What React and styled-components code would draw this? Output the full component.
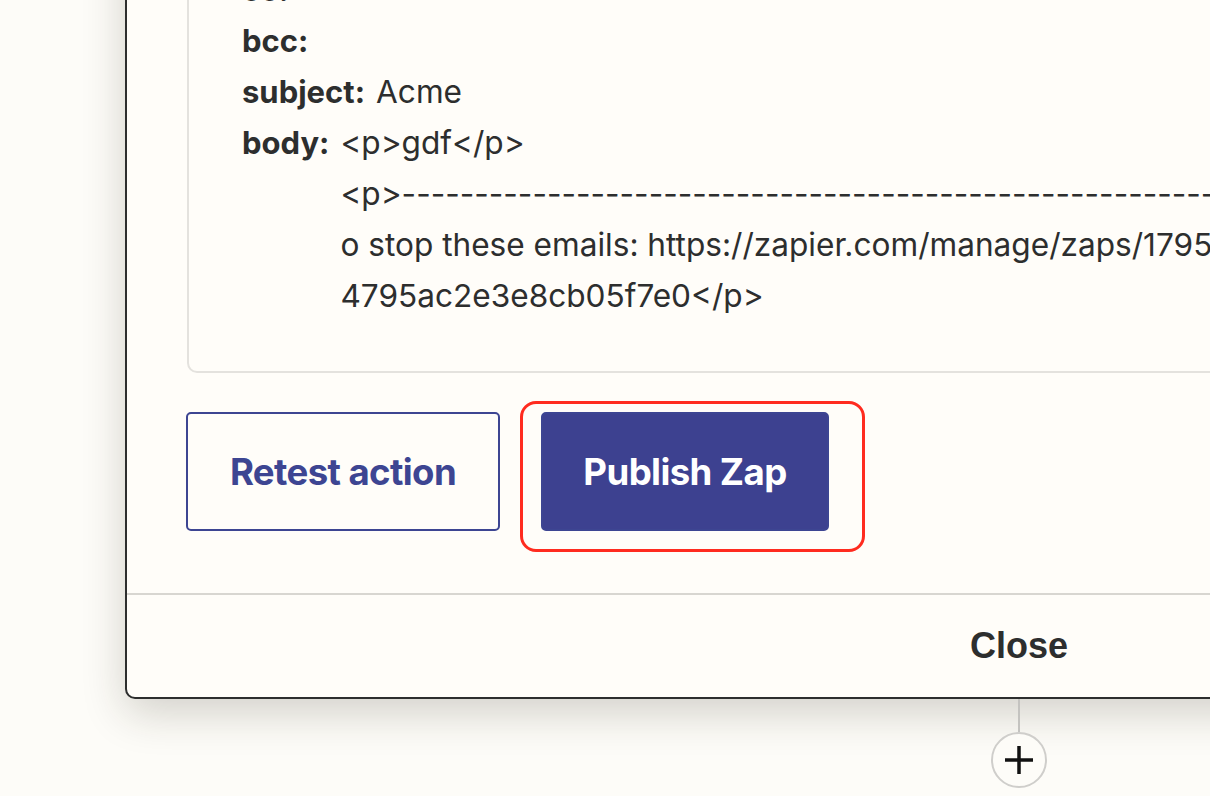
import React from "react";
import styled, { createGlobalStyle } from "styled-components";

const Global = createGlobalStyle`
  html, body { margin: 0; padding: 0; background: #fdfcf8; overflow: hidden; }
  body { font-family: Inter, "Noto Sans", sans-serif; color: #2d2e2e; }
`;

const Canvas = styled.div`
  width: 1210px;
  height: 796px;
  overflow: hidden;
  padding-left: 125px;
  box-sizing: border-box;
`;

const Modal = styled.div`
  width: 1784px;
  margin-top: -120px;
  background: #fffdf9;
  border: 2px solid #2d2e2e;
  border-radius: 10px;
  box-shadow: 0 14px 44px rgba(40, 35, 20, 0.2);
  display: flex;
  flex-direction: column;
`;

const Body = styled.div`
  padding: 40px 60px 62px 60px;
  display: flex;
  flex-direction: column;
  gap: 39px;
`;

const Card = styled.div`
  border: 2px solid #e4e2de;
  border-radius: 10px;
  padding: 40px 54px 50px 53px;
  display: flex;
  flex-direction: column;
`;

const Row = styled.div`
  display: flex;
  gap: 11px;
  font-size: 31px;
  line-height: 51px;
  white-space: nowrap;
`;

const Label = styled.span`
  font-weight: 700;
  flex: none;
`;

const Value = styled.div`
  display: flex;
  flex-direction: column;
  font-weight: 400;
  font-size: 31.6px;
`;

const Actions = styled.div`
  display: flex;
  gap: 41px;
  margin-left: -1px;
`;

const Button = styled.button`
  box-sizing: border-box;
  height: 119px;
  width: ${(p) => p.$w}px;
  border-radius: 5px;
  border: 2px solid #3d4592;
  background: ${(p) => (p.$primary ? "#3d4190" : "transparent")};
  color: ${(p) => (p.$primary ? "#ffffff" : "#3d4592")};
  font-family: Inter, "Noto Sans", sans-serif;
  font-weight: 700;
  font-size: 36.6px;
  letter-spacing: -0.6px;
  cursor: pointer;
  padding: 0;
`;

const Highlight = styled.div`
  position: relative;
  &::after {
    content: "";
    position: absolute;
    top: -11px;
    left: -21px;
    right: -36px;
    bottom: -21px;
    border: 3.5px solid #ff2b1f;
    border-radius: 16px;
    pointer-events: none;
  }
`;

const Footer = styled.div`
  border-top: 2px solid #d8d6d1;
  height: 102px;
  display: flex;
  align-items: center;
  justify-content: center;
`;

const CloseButton = styled.button`
  background: none;
  border: none;
  font-family: "Liberation Sans", Arial, sans-serif;
  font-weight: 700;
  font-size: 36px;
  color: #2d2e2e;
  cursor: pointer;
  padding: 0;
`;

const Connector = styled.div`
  width: 1788px;
  display: flex;
  flex-direction: column;
  align-items: center;
`;

const Stem = styled.div`
  width: 2px;
  height: 33px;
  background: #c4c3c0;
`;

const AddButton = styled.button`
  width: 56px;
  height: 56px;
  border-radius: 50%;
  border: 2px solid #cfcecb;
  background: #fdfcf8;
  display: flex;
  align-items: center;
  justify-content: center;
  padding: 0;
`;

const dashes = "-".repeat(90);

export default function App() {
  return (
    <>
      <Global />
      <Canvas>
        <Modal>
          <Body>
            <Card>
              <Row>
                <Label>cc:</Label>
              </Row>
              <Row>
                <Label>bcc:</Label>
              </Row>
              <Row>
                <Label>subject:</Label>
                <Value>Acme</Value>
              </Row>
              <Row>
                <Label>body:</Label>
                <Value>
                  <span>&lt;p&gt;gdf&lt;/p&gt;</span>
                  <span>&lt;p&gt;{dashes}</span>
                  <span>o stop these emails: https://zapier.com/manage/zaps/179588271/notifications/</span>
                  <span>4795ac2e3e8cb05f7e0&lt;/p&gt;</span>
                </Value>
              </Row>
            </Card>
            <Actions>
              <Button $w={314}>Retest action</Button>
              <Highlight>
                <Button $primary $w={288}>Publish Zap</Button>
              </Highlight>
            </Actions>
          </Body>
          <Footer>
            <CloseButton>Close</CloseButton>
          </Footer>
        </Modal>
        <Connector>
          <Stem />
          <AddButton aria-label="Add step">
            <svg width="32" height="32" viewBox="0 0 32 32">
              <path d="M16 2v28M2 16h28" stroke="#111" strokeWidth="3.5" />
            </svg>
          </AddButton>
        </Connector>
      </Canvas>
    </>
  );
}
